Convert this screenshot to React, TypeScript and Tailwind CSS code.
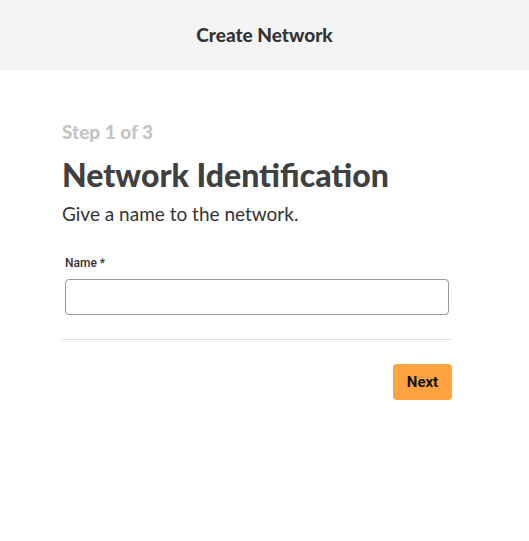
export default function App() {
  return (
    <div className="min-h-[541px] bg-white font-['Lato',sans-serif] text-[#444]">
      <header className="flex h-[70px] items-center justify-center bg-[#f4f4f4]">
        <h1 className="text-[19px] font-black text-[#333]">Create Network</h1>
      </header>
      <main className="ml-[62px] w-[390px] pt-[50px]">
        <p className="text-[19px] font-black leading-6 text-[#c4c4c4]">Step 1 of 3</p>
        <h2 className="mt-[11px] text-[32px] font-black leading-10 text-[#404040]">
          Network Identification
        </h2>
        <p className="mt-[5px] text-[19px] leading-7 text-[#333]">Give a name to the network.</p>
        <form className="mt-[27px] pl-[3px] pr-[3px]">
          <label className="block font-['Roboto',sans-serif] text-[12px] font-medium leading-4 text-[#333]">
            Name *
          </label>
          <input
            type="text"
            className="mt-[8px] block h-[36px] w-[384px] rounded-[4px] border border-[#999] px-3 outline-none"
          />
        </form>
        <hr className="mt-[24px] border-t border-[#e0e0e0]" />
        <div className="mt-[24px] flex justify-end">
          <button className="h-[36px] w-[59px] rounded-[4px] bg-[#ffa23f] font-['Roboto',sans-serif] text-[15px] font-bold text-[#111]">
            Next
          </button>
        </div>
      </main>
    </div>
  );
}
